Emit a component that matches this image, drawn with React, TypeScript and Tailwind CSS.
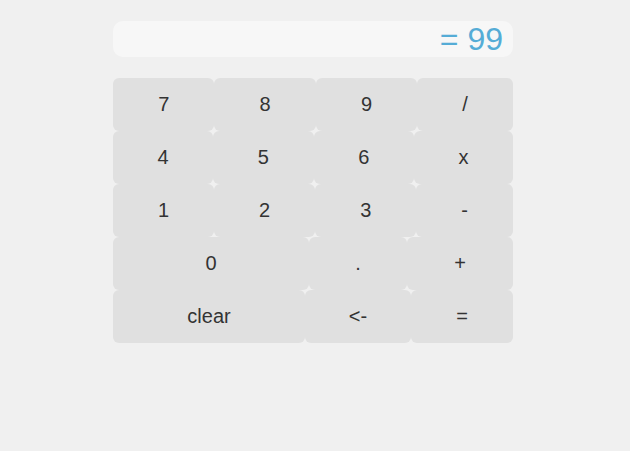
import React from "react";

const btn =
  "h-[53px] flex items-center justify-center rounded-[6px] bg-[#e0e0e0] text-[20px] text-[#333333] px-2 pb-[2px]";

export default function App() {
  const rows1 = [
    ["7", "8", "9", "/"],
    ["4", "5", "6", "x"],
    ["1", "2", "3", "-"],
  ];
  return (
    <div
      className="w-[630px] h-[451px] bg-[#f0f0f0] pt-[21px]"
      style={{ fontFamily: '"Liberation Sans", Arial, sans-serif' }}
    >
      <div className="w-[400px] ml-[113px] flex flex-col">
        <div className="h-[36px] rounded-[10px] bg-[#f7f7f7] flex items-center justify-end pr-[10px] text-[32px] text-[#55acd6] leading-none">
          = 99
        </div>
        <div className="mt-[21px] flex flex-col">
          {rows1.map((r, i) => (
            <div key={i} className="flex">
              {r.map((k) => (
                <div key={k} className={btn + " flex-auto"}>
                  {k}
                </div>
              ))}
            </div>
          ))}
          <div className="flex">
            <div className={btn + " w-[196px]"}>0</div>
            <div className={btn + " w-[98px]"}>.</div>
            <div className={btn + " flex-1"}>+</div>
          </div>
          <div className="flex">
            <div className={btn + " w-[192px]"}>clear</div>
            <div className={btn + " w-[106px]"}>&lt;-</div>
            <div className={btn + " flex-1"}>=</div>
          </div>
        </div>
      </div>
    </div>
  );
}
